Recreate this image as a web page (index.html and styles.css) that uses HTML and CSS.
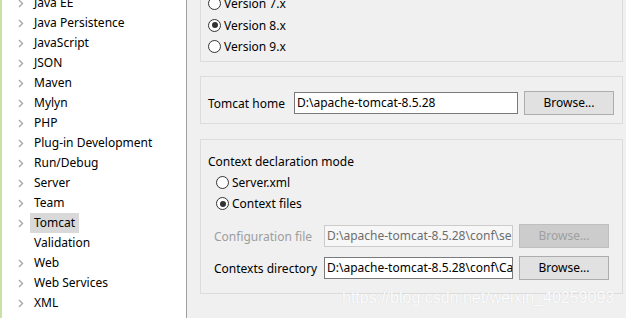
FILE: index.html
```html
<!DOCTYPE html>
<html>
<head>
<meta charset="utf-8">
<link rel="stylesheet" href="styles.css">
</head>
<body>
<div class="window">
  <div class="tree">
    <ul class="tree-list">
      <li class="node"><span class="chev"><svg width="6" height="9" viewBox="0 0 6 9"><polyline points="1,1 4.5,4.5 1,8" /></svg></span><span class="label">Java EE</span></li>
      <li class="node"><span class="chev"><svg width="6" height="9" viewBox="0 0 6 9"><polyline points="1,1 4.5,4.5 1,8" /></svg></span><span class="label">Java Persistence</span></li>
      <li class="node"><span class="chev"><svg width="6" height="9" viewBox="0 0 6 9"><polyline points="1,1 4.5,4.5 1,8" /></svg></span><span class="label">JavaScript</span></li>
      <li class="node"><span class="chev"><svg width="6" height="9" viewBox="0 0 6 9"><polyline points="1,1 4.5,4.5 1,8" /></svg></span><span class="label">JSON</span></li>
      <li class="node"><span class="chev"><svg width="6" height="9" viewBox="0 0 6 9"><polyline points="1,1 4.5,4.5 1,8" /></svg></span><span class="label">Maven</span></li>
      <li class="node"><span class="chev"><svg width="6" height="9" viewBox="0 0 6 9"><polyline points="1,1 4.5,4.5 1,8" /></svg></span><span class="label">Mylyn</span></li>
      <li class="node"><span class="chev"><svg width="6" height="9" viewBox="0 0 6 9"><polyline points="1,1 4.5,4.5 1,8" /></svg></span><span class="label">PHP</span></li>
      <li class="node"><span class="chev"><svg width="6" height="9" viewBox="0 0 6 9"><polyline points="1,1 4.5,4.5 1,8" /></svg></span><span class="label">Plug-in Development</span></li>
      <li class="node"><span class="chev"><svg width="6" height="9" viewBox="0 0 6 9"><polyline points="1,1 4.5,4.5 1,8" /></svg></span><span class="label">Run/Debug</span></li>
      <li class="node"><span class="chev"><svg width="6" height="9" viewBox="0 0 6 9"><polyline points="1,1 4.5,4.5 1,8" /></svg></span><span class="label">Server</span></li>
      <li class="node"><span class="chev"><svg width="6" height="9" viewBox="0 0 6 9"><polyline points="1,1 4.5,4.5 1,8" /></svg></span><span class="label">Team</span></li>
      <li class="node"><span class="chev"><svg width="6" height="9" viewBox="0 0 6 9"><polyline points="1,1 4.5,4.5 1,8" /></svg></span><span class="label selected">Tomcat</span></li>
      <li class="node"><span class="chev"></span><span class="label">Validation</span></li>
      <li class="node"><span class="chev"><svg width="6" height="9" viewBox="0 0 6 9"><polyline points="1,1 4.5,4.5 1,8" /></svg></span><span class="label">Web</span></li>
      <li class="node"><span class="chev"><svg width="6" height="9" viewBox="0 0 6 9"><polyline points="1,1 4.5,4.5 1,8" /></svg></span><span class="label">Web Services</span></li>
      <li class="node"><span class="chev"><svg width="6" height="9" viewBox="0 0 6 9"><polyline points="1,1 4.5,4.5 1,8" /></svg></span><span class="label">XML</span></li>
    </ul>
  </div>
  <div class="content">
    <div class="group group-version">
      <div class="radio-row"><span class="radio"></span><span>Version 7.x</span></div>
      <div class="radio-row"><span class="radio checked"></span><span>Version 8.x</span></div>
      <div class="radio-row"><span class="radio"></span><span>Version 9.x</span></div>
    </div>
    <div class="group group-home">
      <div class="field-row">
        <span class="field-label home-label">Tomcat home</span>
        <div class="input home-input">D:\apache-tomcat-8.5.28</div>
        <div class="button">Browse...</div>
      </div>
    </div>
    <div class="group group-context">
      <div class="mode-label">Context declaration mode</div>
      <div class="radio-row indent"><span class="radio"></span><span>Server.xml</span></div>
      <div class="radio-row indent"><span class="radio checked"></span><span>Context files</span></div>
      <div class="field-row ctx-row first">
        <span class="field-label ctx-label disabled">Configuration file</span>
        <div class="input ctx-input disabled">D:\apache-tomcat-8.5.28\conf\server.xml</div>
        <div class="button disabled">Browse...</div>
      </div>
      <div class="field-row ctx-row">
        <span class="field-label ctx-label">Contexts directory</span>
        <div class="input ctx-input">D:\apache-tomcat-8.5.28\conf\Catalina\localhost</div>
        <div class="button">Browse...</div>
      </div>
    </div>
  </div>
</div>
<div class="watermark">https://blog.csdn.net/weixin_40259093</div>
</body>
</html>
```

FILE: styles.css
```css
* { box-sizing: border-box; }
html, body {
  margin: 0;
  padding: 0;
  width: 626px;
  height: 318px;
  overflow: hidden;
}
body {
  font-family: "Noto Sans", "Open Sans", sans-serif;
  font-size: 12px;
  color: #000;
  position: relative;
  background: #f0f0f0;
}
.window {
  display: flex;
  height: 318px;
}
.tree {
  width: 187px;
  flex: 0 0 187px;
  background: #fff;
  border-left: 2px solid #c9e2a6;
  border-right: 1px solid #a0a0a0;
  overflow: hidden;
}
.tree-list {
  list-style: none;
  margin: -7px 0 0 0;
  padding: 0 0 0 16px;
}
.node {
  display: flex;
  align-items: center;
  height: 20px;
}
.chev {
  width: 12px;
  height: 20px;
  display: flex;
  align-items: center;
}
.chev svg polyline {
  fill: none;
  stroke: #a8a8a8;
  stroke-width: 1.4;
}
.label {
  line-height: 20px;
  height: 20px;
  padding: 0 4px;
  white-space: nowrap;
}
.label.selected {
  background: #d9d9d9;
}
.content {
  flex: 1;
  padding: 0 3px 0 13px;
  background: #f0f0f0;
}
.group {
  border: 1px solid #dcdcdc;
}
.group-version {
  margin-top: -8px;
  padding: 0 0 3.5px 7px;
}
.radio-row {
  display: flex;
  align-items: center;
  height: 21.5px;
  white-space: nowrap;
}
.radio {
  width: 13px;
  height: 13px;
  border: 1px solid #333;
  border-radius: 50%;
  background: #fff;
  margin-right: 3px;
  position: relative;
  flex: 0 0 13px;
}
.radio.checked::after {
  content: "";
  position: absolute;
  left: 2.5px;
  top: 2.5px;
  width: 6px;
  height: 6px;
  border-radius: 50%;
  background: #333;
}
.group-home {
  margin-top: 14px;
  padding: 14px 8px 8px 7px;
}
.field-row {
  display: flex;
  align-items: center;
  height: 24px;
}
.field-label {
  white-space: nowrap;
}
.home-label {
  flex: 0 0 86px;
}
.input {
  height: 22px;
  line-height: 20px;
  border: 1px solid #7a7a7a;
  background: #fff;
  padding: 0 2px;
  white-space: nowrap;
  overflow: hidden;
}
.home-input {
  flex: 0 0 224px;
}
.button {
  width: 90px;
  flex: 0 0 90px;
  height: 24px;
  line-height: 22px;
  margin-left: 6px;
  text-align: center;
  background: #e1e1e1;
  border: 1px solid #adadad;
}
.group-context {
  margin-top: 15px;
  padding: 11px 13px 13px 7px;
}
.mode-label {
  line-height: 21px;
  height: 21px;
  white-space: nowrap;
}
.radio-row.indent {
  height: 21px;
  padding-left: 8px;
}
.ctx-row {
  margin-top: 8px;
  padding-left: 6px;
}
.ctx-row.first {
  margin-top: 10px;
}
.ctx-label {
  flex: 0 0 110px;
}
.ctx-input {
  flex: 0 0 189px;
}
.field-label.disabled {
  color: #9d9d9d;
}
.input.disabled {
  background: #f7f7f7;
  border-color: #cccccc;
  color: #6d6d6d;
}
.button.disabled {
  background: #cccccc;
  border-color: #bfbfbf;
  color: #a0a0a0;
}
.watermark {
  position: absolute;
  left: 342px;
  top: 289px;
  font-family: "Liberation Sans", Arial, sans-serif;
  font-size: 16px;
  color: rgba(255, 255, 255, 0.95);
  text-shadow: 0 0 1px #d0d0d0;
  white-space: nowrap;
}
```
